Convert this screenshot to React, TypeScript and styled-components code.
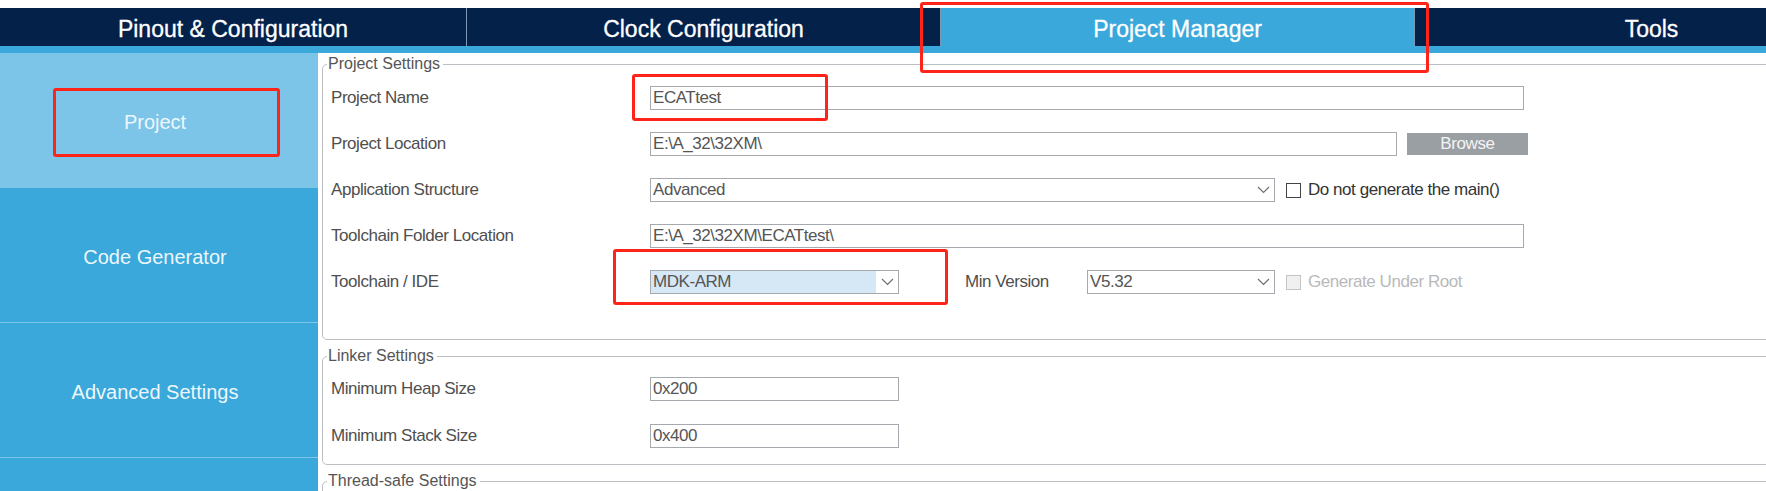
import React from 'react'
import styled, { createGlobalStyle } from 'styled-components'

const GlobalStyle = createGlobalStyle`
	html, body {
		margin: 0;
		padding: 0;
		background: #ffffff;
	}
	body {
		font-family: "Liberation Sans", Arial, sans-serif;
		overflow: hidden;
	}
`

const tabs = ['Pinout & Configuration', 'Clock Configuration', 'Project Manager', 'Tools']
const sideItems = ['Project', 'Code Generator', 'Advanced Settings', '']

const Chevron: React.FC = () => (
	<svg width="13" height="8" viewBox="0 0 13 8">
		<polyline points="1,1 6.5,6.5 12,1" fill="none" stroke="#707070" strokeWidth="1.2" />
	</svg>
)

interface ComboProps {
	width: number
	value: string
	highlight?: boolean
}

const Combo: React.FC<ComboProps> = ({ width, value, highlight }) => (
	<StyledCombo $w={width}>
		<StyledComboValue $highlight={highlight}>{value}</StyledComboValue>
		<StyledComboArrow>
			<Chevron />
		</StyledComboArrow>
	</StyledCombo>
)

const App: React.FC = () => {
	return (
		<StyledPage>
			<GlobalStyle />
			<StyledTopGap />
			<StyledTabBar>
				{tabs.map((t, i) => (
					<StyledTab key={t} $first={i === 0} $active={i === 2}>
						{t}
					</StyledTab>
				))}
			</StyledTabBar>
			<StyledStripe />
			<StyledBody>
				<StyledSidebar>
					{sideItems.map((s, i) => (
						<StyledSideItem key={i} $active={i === 0}>
							{s}
						</StyledSideItem>
					))}
				</StyledSidebar>
				<StyledContent>
					<StyledGroup $pt={2} $pb={34}>
						<StyledLegend>Project Settings</StyledLegend>
						<StyledRow>
							<StyledLabel>Project Name</StyledLabel>
							<StyledField $w={874}>ECATtest</StyledField>
						</StyledRow>
						<StyledRow>
							<StyledLabel>Project Location</StyledLabel>
							<StyledControls>
								<StyledField $w={747}>E:\A_32\32XM\</StyledField>
								<StyledBrowse>Browse</StyledBrowse>
							</StyledControls>
						</StyledRow>
						<StyledRow>
							<StyledLabel>Application Structure</StyledLabel>
							<StyledControls>
								<Combo width={625} value="Advanced" />
								<StyledCheck>
									<StyledBox />
									<span>Do not generate the main()</span>
								</StyledCheck>
							</StyledControls>
						</StyledRow>
						<StyledRow>
							<StyledLabel>Toolchain Folder Location</StyledLabel>
							<StyledField $w={874}>E:\A_32\32XM\ECATtest\</StyledField>
						</StyledRow>
						<StyledRow>
							<StyledLabel>Toolchain / IDE</StyledLabel>
							<StyledControls>
								<Combo width={249} value="MDK-ARM" highlight />
								<StyledInlineLabel>Min Version</StyledInlineLabel>
								<Combo width={188} value="V5.32" />
								<StyledCheck $disabled>
									<StyledBox $disabled />
									<span>Generate Under Root</span>
								</StyledCheck>
							</StyledControls>
						</StyledRow>
					</StyledGroup>

					<StyledGroup $pt={0} $pb={5}>
						<StyledLegend>Linker Settings</StyledLegend>
						<StyledRow $h={47}>
							<StyledLabel>Minimum Heap Size</StyledLabel>
							<StyledField $w={249}>0x200</StyledField>
						</StyledRow>
						<StyledRow $h={47}>
							<StyledLabel>Minimum Stack Size</StyledLabel>
							<StyledField $w={249}>0x400</StyledField>
						</StyledRow>
					</StyledGroup>

					<StyledGroup $pt={0} $pb={60}>
						<StyledLegend>Thread-safe Settings</StyledLegend>
					</StyledGroup>
				</StyledContent>
			</StyledBody>

			{/* red annotation frames drawn over the screenshot */}
			<StyledMark $x={920} $y={2} $w={509} $h={71} />
			<StyledMark $x={53} $y={88} $w={227} $h={69} />
			<StyledMark $x={632} $y={74} $w={196} $h={47} />
			<StyledMark $x={613} $y={249} $w={335} $h={56} />
		</StyledPage>
	)
}

const StyledPage = styled.div`
	position: relative;
	width: 1766px;
	height: 491px;
	overflow: hidden;
	background: #ffffff;
`

const StyledTopGap = styled.div`
	height: 8px;
	background: #ffffff;
`

const StyledTabBar = styled.div`
	display: flex;
	height: 38px;
	background: #04214a;
	overflow: hidden;
`

const StyledTab = styled.div<{ $first?: boolean; $active?: boolean }>`
	flex-shrink: 0;
	box-sizing: border-box;
	width: ${(p) => (p.$first ? 466 : 474)}px;
	border-left: ${(p) => (p.$first ? 'none' : '1px solid #7f97b1')};
	background: ${(p) => (p.$active ? '#3aa8db' : '#04214a')};
	color: #ffffff;
	font-size: 23px;
	-webkit-text-stroke: 0.3px #ffffff;
	display: flex;
	align-items: center;
	justify-content: center;
	padding-top: 5px;
`

const StyledStripe = styled.div`
	height: 7px;
	background: #3aa8db;
`

const StyledBody = styled.div`
	display: flex;
	height: 438px;
`

const StyledSidebar = styled.div`
	width: 318px;
	flex-shrink: 0;
	background: #3aa8db;
	display: flex;
	flex-direction: column;
`

const StyledSideItem = styled.div<{ $active?: boolean }>`
	box-sizing: border-box;
	height: 135px;
	flex-shrink: 0;
	border-bottom: 1px solid #7cc4e8;
	background: ${(p) => (p.$active ? '#7cc5e8' : '#3aa8db')};
	color: #ecf7fc;
	font-size: 20px;
	display: flex;
	align-items: center;
	justify-content: center;
	padding: 5px 8px 0 0;
`

const StyledContent = styled.div`
	flex: 1;
	min-width: 0;
	overflow: hidden;
	padding: 2px 0 0 4px;
`

const StyledGroup = styled.fieldset<{ $pt: number; $pb: number }>`
	margin: 0 -24px 7px 0;
	padding: ${(p) => p.$pt}px 0 ${(p) => p.$pb}px 4px;
	border: 1px solid #bcc0c4;
	border-radius: 5px;
	min-width: 0;
`

const StyledLegend = styled.legend`
	padding: 0 3px 0 1px;
	font-size: 16px;
	line-height: 18px;
	color: #555555;
`

const StyledRow = styled.div<{ $h?: number }>`
	display: grid;
	grid-template-columns: 319px auto;
	align-items: center;
	height: ${(p) => p.$h || 46}px;
	padding-left: 4px;
`

const StyledLabel = styled.div`
	font-size: 17px;
	letter-spacing: -0.45px;
	color: #4f4f4f;
`

const StyledControls = styled.div`
	display: flex;
	align-items: center;
`

const StyledField = styled.div<{ $w: number }>`
	box-sizing: border-box;
	width: ${(p) => p.$w}px;
	height: 24px;
	border: 1px solid #a6aaae;
	padding: 0 2px;
	display: flex;
	align-items: center;
	font-size: 17px;
	letter-spacing: -0.45px;
	color: #555555;
	background: #ffffff;
	white-space: nowrap;
`

const StyledBrowse = styled.div`
	margin-left: 10px;
	width: 121px;
	height: 22px;
	background: #9a9fa3;
	color: #f4f4f4;
	font-size: 17px;
	letter-spacing: -0.4px;
	display: flex;
	align-items: center;
	justify-content: center;
`

const StyledCombo = styled.div<{ $w: number }>`
	box-sizing: border-box;
	width: ${(p) => p.$w}px;
	height: 24px;
	border: 1px solid #a6aaae;
	display: flex;
	background: #ffffff;
`

const StyledComboValue = styled.div<{ $highlight?: boolean }>`
	flex: 1;
	display: flex;
	align-items: center;
	padding-left: 2px;
	font-size: 17px;
	letter-spacing: -0.45px;
	color: #555555;
	background: ${(p) => (p.$highlight ? '#d6e7f6' : '#ffffff')};
`

const StyledComboArrow = styled.div`
	width: 22px;
	display: flex;
	align-items: center;
	justify-content: center;
`

const StyledInlineLabel = styled.div`
	width: 122px;
	padding-left: 66px;
	font-size: 17px;
	letter-spacing: -0.45px;
	color: #4f4f4f;
`

const StyledCheck = styled.div<{ $disabled?: boolean }>`
	display: flex;
	align-items: center;
	gap: 7px;
	margin-left: 11px;
	font-size: 17px;
	letter-spacing: -0.45px;
	color: ${(p) => (p.$disabled ? '#b9b9b9' : '#333333')};
`

const StyledBox = styled.div<{ $disabled?: boolean }>`
	box-sizing: border-box;
	width: 15px;
	height: 15px;
	border: 1px solid ${(p) => (p.$disabled ? '#c4c4c4' : '#444444')};
	background: ${(p) => (p.$disabled ? '#f0f0f0' : '#ffffff')};
`

const StyledMark = styled.div<{ $x: number; $y: number; $w: number; $h: number }>`
	position: absolute;
	box-sizing: border-box;
	left: ${(p) => p.$x}px;
	top: ${(p) => p.$y}px;
	width: ${(p) => p.$w}px;
	height: ${(p) => p.$h}px;
	border: 3px solid #ff2419;
	border-radius: 3px;
	pointer-events: none;
`

export default App
